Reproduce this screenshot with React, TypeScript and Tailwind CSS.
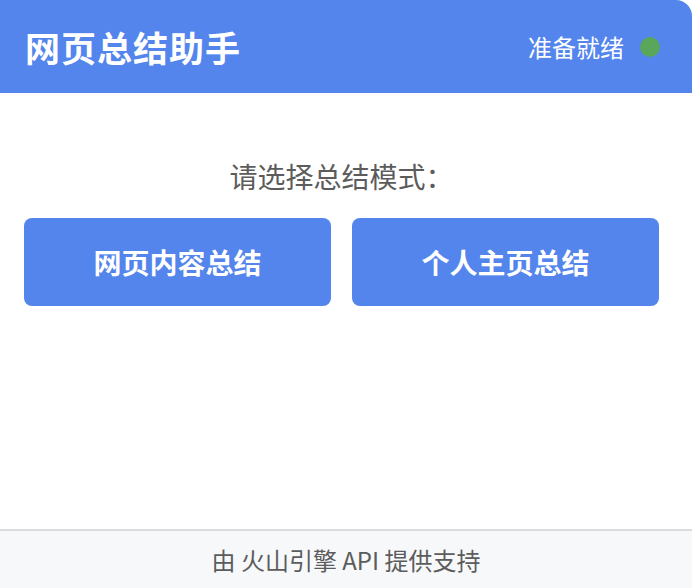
import React from "react";

const font = { fontFamily: '"Noto Sans CJK SC", "Noto Sans", sans-serif' };

export default function App() {
  return (
    <div
      className="flex h-[588px] w-[692px] flex-col overflow-hidden rounded-tr-[16px] bg-white"
      style={font}
    >
      <header className="flex h-[93px] shrink-0 items-center justify-between bg-[#5385ec] pl-[25px] pr-[32px]">
        <h1 className="text-[35px] font-bold leading-none tracking-[1px] text-white">网页总结助手</h1>
        <div className="flex items-center gap-[16px]">
          <span className="text-[24px] leading-none text-white">准备就绪</span>
          <span className="h-[20px] w-[20px] rounded-full bg-[#5aa65b]" />
        </div>
      </header>

      <main className="flex-1 pl-[24px] pr-[33px] pt-[69px]">
        <p className="text-center text-[28px] leading-none text-[#5c5c5c]">请选择总结模式：</p>
        <div className="mt-[28px] grid grid-cols-2 gap-[21px]">
          <button className="h-[88px] rounded-[8px] bg-[#5385ec] text-[28px] font-bold text-white">
            网页内容总结
          </button>
          <button className="h-[88px] rounded-[8px] bg-[#5385ec] text-[28px] font-bold text-white">
            个人主页总结
          </button>
        </div>
      </main>

      <footer className="flex h-[59px] shrink-0 items-center justify-center border-t-2 border-[#dcdce0] bg-[#f7f8fa]">
        <span className="text-[24px] text-[#5c5c5c]">由 火山引擎 API 提供支持</span>
      </footer>
    </div>
  );
}
